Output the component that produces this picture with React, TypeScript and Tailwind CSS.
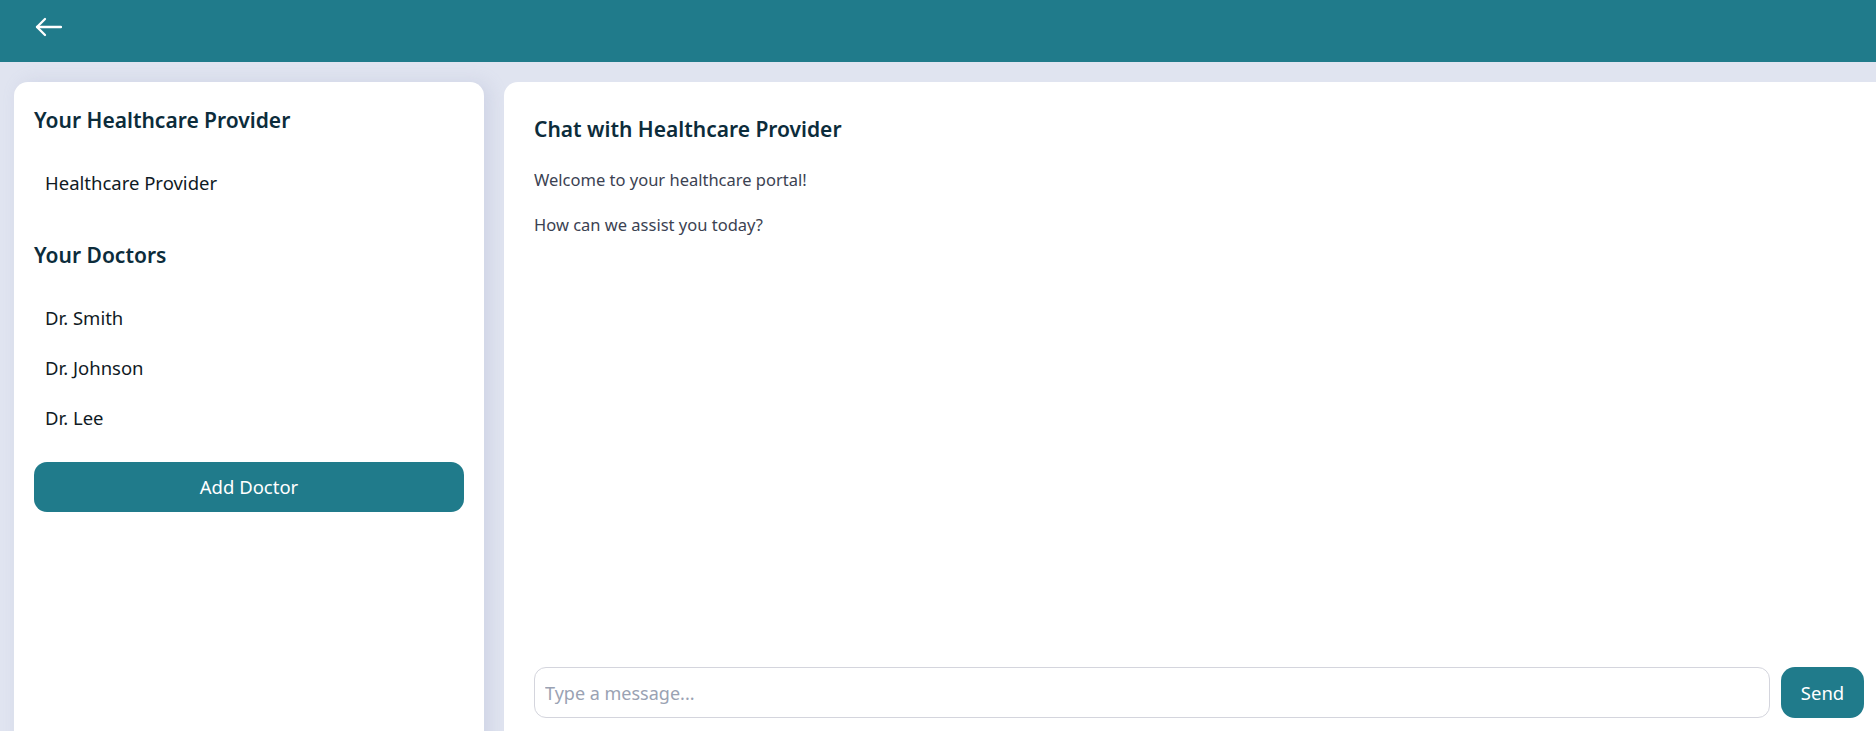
import React from 'react';

const doctors = ['Dr. Smith', 'Dr. Johnson', 'Dr. Lee'];

const BackArrow: React.FC = () => (
    <svg width="27" height="20" viewBox="0 0 27 20" fill="none" stroke="white" strokeWidth="2.3" strokeLinecap="round" strokeLinejoin="round">
        <path d="M26 10H2" />
        <path d="M10 2L2 10L10 18" />
    </svg>
);

export default function App() {
    return (
        <div className="h-screen overflow-hidden bg-[#e0e4f0] font-['Noto_Sans',sans-serif]">
            {/* Header */}
            <header className="h-[62px] bg-[#207b8b] flex items-start pl-[35px] pt-[17px]">
                <button>
                    <BackArrow />
                </button>
            </header>

            <div className="flex gap-[20px] pl-[14px] pt-[20px]">
                {/* Sidebar */}
                <aside className="w-[470px] shrink-0 h-[680px] bg-white rounded-[14px] shadow-[6px_0_18px_rgba(140,150,190,0.2)] px-[20px] pt-[24px]">
                    <h2 className="text-[21px] leading-[28px] font-semibold text-[#0c2c3b]">Your Healthcare Provider</h2>
                    <div className="mt-[36px] px-[11px] text-[18.5px] leading-[26px] text-[#0f1a24]">Healthcare Provider</div>

                    <h2 className="mt-[45px] text-[21px] leading-[28px] font-semibold text-[#0c2c3b]">Your Doctors</h2>
                    <ul className="mt-[36px] space-y-[24px]">
                        {doctors.map(d => (
                            <li key={d} className="px-[11px] text-[18.5px] leading-[26px] text-[#0f1a24]">{d}</li>
                        ))}
                    </ul>
                    <button className="mt-[31px] w-full h-[50px] rounded-[13px] bg-[#207b8b] text-white text-[18.5px]">
                        Add Doctor
                    </button>
                </aside>

                {/* Chat */}
                <main className="w-[1390px] shrink-0 h-[666px] bg-white rounded-[14px] pl-[30px] pr-[30px] pt-[33px] pb-[30px] flex flex-col">
                    <h2 className="text-[21px] leading-[28px] font-semibold text-[#0c2c3b]">Chat with Healthcare Provider</h2>
                    <div className="mt-[25px] space-y-[21px] text-[16.5px] leading-[24px] text-[#3b4252]">
                        <p>Welcome to your healthcare portal!</p>
                        <p>How can we assist you today?</p>
                    </div>
                    <div className="mt-auto flex gap-[11px] items-stretch">
                        <input
                            type="text"
                            placeholder="Type a message..."
                            className="flex-1 h-[51px] rounded-[12px] border border-[#d4d5dd] px-[10px] text-[18px] placeholder:text-[#9aa2b3] outline-none"
                        />
                        <button className="w-[83px] h-[51px] rounded-[14px] bg-[#207b8b] text-white text-[18.5px]">Send</button>
                    </div>
                </main>
            </div>
        </div>
    );
}
